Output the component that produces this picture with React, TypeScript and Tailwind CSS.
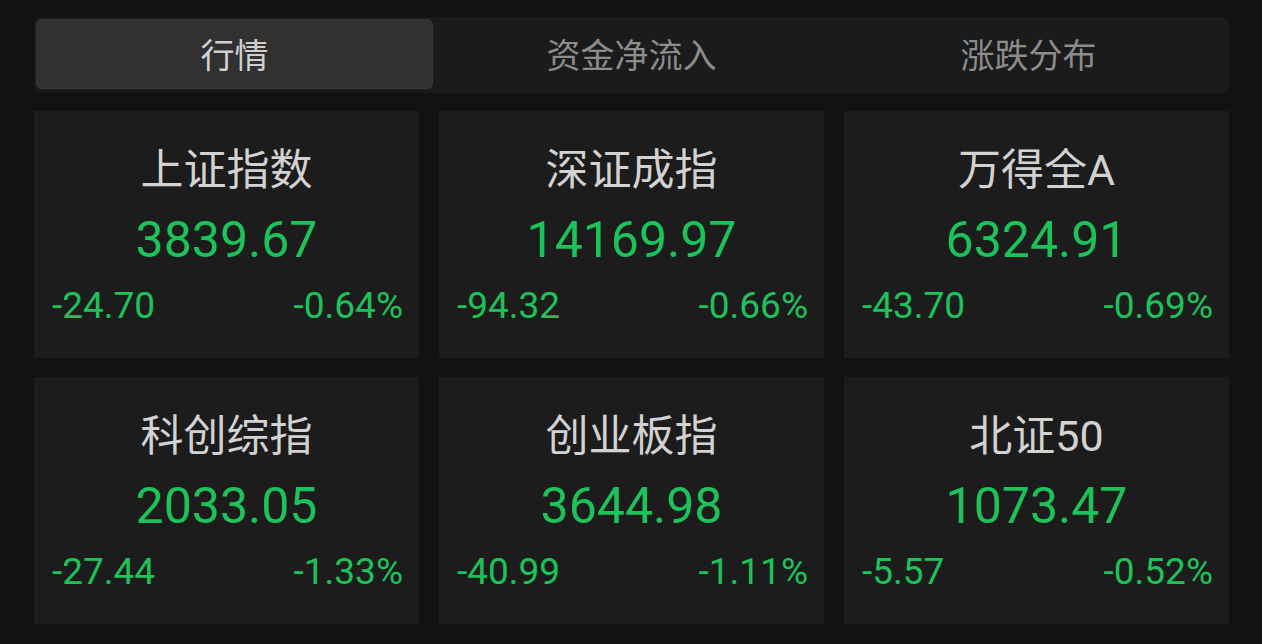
import React from 'react';

type IndexQuote = {
  name: string;
  price: string;
  change: string;
  pct: string;
};

const tabs = ['行情', '资金净流入', '涨跌分布'];

const quotes: IndexQuote[] = [
  { name: '上证指数', price: '3839.67', change: '-24.70', pct: '-0.64%' },
  { name: '深证成指', price: '14169.97', change: '-94.32', pct: '-0.66%' },
  { name: '万得全A', price: '6324.91', change: '-43.70', pct: '-0.69%' },
  { name: '科创综指', price: '2033.05', change: '-27.44', pct: '-1.33%' },
  { name: '创业板指', price: '3644.98', change: '-40.99', pct: '-1.11%' },
  { name: '北证50', price: '1073.47', change: '-5.57', pct: '-0.52%' },
];

const font = { fontFamily: 'Roboto, "Noto Sans CJK SC", sans-serif' };

function QuoteCard({ q }: { q: IndexQuote }) {
  return (
    <div className="bg-[#1c1c1c] h-[247px] flex flex-col items-center pt-[35px]">
      <div className="text-[43px] leading-[48px] text-[#d2d2d2]">{q.name}</div>
      <div className="mt-[16px] text-[50px] leading-[60px] text-[#1cc25a]">{q.price}</div>
      <div className="mt-[14px] w-full flex justify-between pl-[18px] pr-[16px] text-[37px] leading-[44px] text-[#1cc25a]">
        <span>{q.change}</span>
        <span>{q.pct}</span>
      </div>
    </div>
  );
}

export default function App() {
  return (
    <div className="min-h-screen w-full bg-[#121212] pl-[34px] pr-[33px] pt-[17px] pb-[19px]" style={font}>
      {/* segmented tabs */}
      <div className="h-[76px] rounded-[8px] bg-[#1b1b1b] p-[2px] grid grid-cols-3">
        {tabs.map((t, i) => (
          <div
            key={t}
            className={`h-[70px] flex items-center justify-center pt-[4px] text-[34px] ${
              i === 0 ? 'bg-[#313131] rounded-[6px] text-[#d0d0d0] border border-[#383838]' : 'text-[#8c8c8c]'
            }`}
          >
            {t}
          </div>
        ))}
      </div>

      {/* index cards */}
      <div className="mt-[18px] grid grid-cols-3 gap-x-[20px] gap-y-[19px]">
        {quotes.map((q) => (
          <QuoteCard key={q.name} q={q} />
        ))}
      </div>
    </div>
  );
}
